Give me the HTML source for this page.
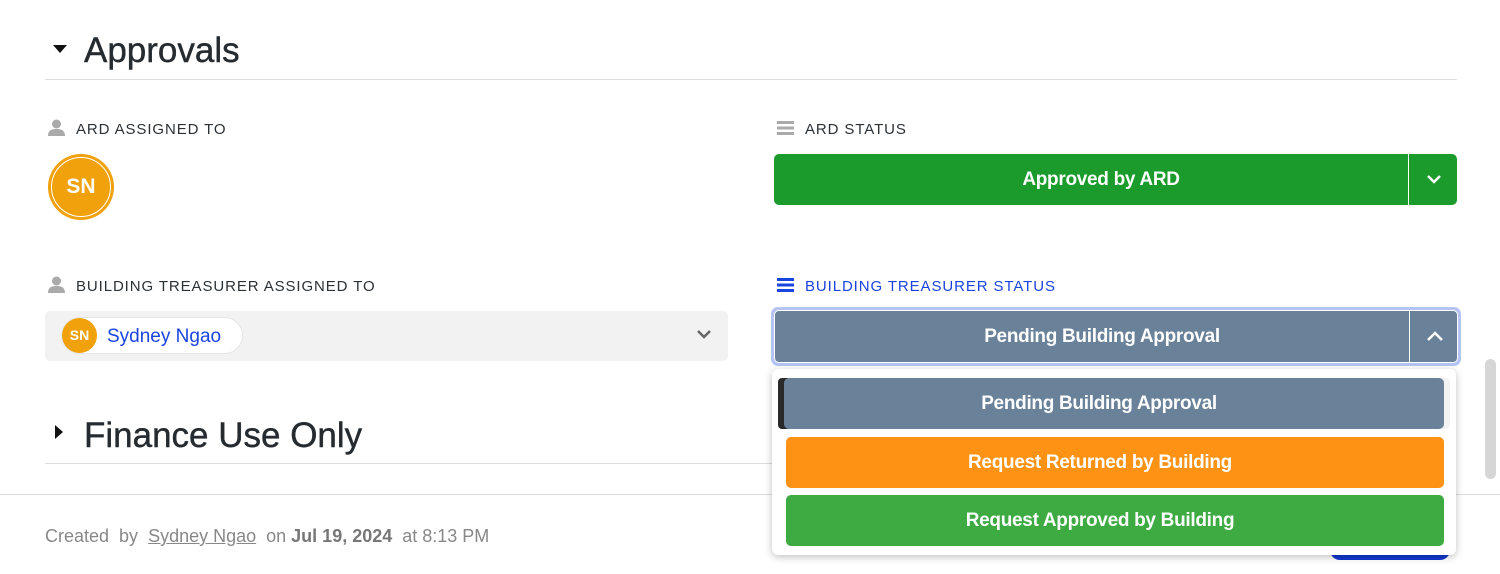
<!DOCTYPE html>
<html><head><style>
*{box-sizing:border-box;margin:0;padding:0}
body{width:1500px;height:574px;overflow:hidden;background:#fff;font-family:"Liberation Sans",sans-serif;position:relative;color:#2c3136}
.a{position:absolute}
h2{font-weight:400;font-size:35px;color:#262b30;-webkit-text-stroke:.4px #262b30}
.lbl{font-size:15px;letter-spacing:.9px;color:#2c3136}
.btn{border-radius:5px;color:#fff;font-weight:700;font-size:19px;text-align:center;letter-spacing:-.3px}
</style></head><body>
<svg class="a" style="left:53px;top:45px" width="14" height="9"><path d="M0 0H14L7 8Z" fill="#111"/></svg>
<h2 class="a" style="left:84px;top:31px">Approvals</h2>
<div class="a" style="left:45px;top:79px;width:1412px;height:1px;background:#ddd"></div>

<svg class="a" style="left:48px;top:119px" width="17" height="17"><circle cx="8.5" cy="5" r="4.5" fill="#aaa"/><path d="M0 17C0 11 4 10 8.5 10S17 11 17 17Z" fill="#aaa"/></svg>
<div class="a lbl" style="left:76px;top:121px">ARD ASSIGNED TO</div>
<div class="a" style="left:48px;top:154px;width:66px;height:66px;border-radius:50%;background:#f0a10c;"></div>
<div class="a" style="left:51px;top:157px;width:60px;height:60px;border-radius:50%;border:1px solid #fff;color:#fff;font-weight:700;font-size:21px;text-align:center;line-height:58px">SN</div>

<svg class="a" style="left:777px;top:121px" width="17" height="14"><rect y="0" width="17" height="3" fill="#aaa"/><rect y="5.5" width="17" height="3" fill="#aaa"/><rect y="11" width="17" height="3" fill="#aaa"/></svg>
<div class="a lbl" style="left:805px;top:121px">ARD STATUS</div>
<div class="a btn" style="left:774px;top:154px;width:683px;height:51px;background:#1b9b2b;line-height:51px"><span style="position:absolute;left:10px;width:634px">Approved by ARD</span><span style="position:absolute;left:634px;top:0;width:1px;height:51px;background:#fff"></span><svg style="position:absolute;left:652px;top:20px" width="16" height="11"><path d="M2 2L8 8L14 2" stroke="#fff" stroke-width="2.5" fill="none"/></svg></div>

<svg class="a" style="left:48px;top:276px" width="17" height="17"><circle cx="8.5" cy="5" r="4.5" fill="#aaa"/><path d="M0 17C0 11 4 10 8.5 10S17 11 17 17Z" fill="#aaa"/></svg>
<div class="a lbl" style="left:76px;top:278px">BUILDING TREASURER ASSIGNED TO</div>
<div class="a" style="left:45px;top:311px;width:683px;height:50px;background:#f2f2f2;border-radius:5px"></div>
<div class="a" style="left:61px;top:317px;width:182px;height:37px;border-radius:19px;background:#fff;border:1px solid #e6e6e6"></div>
<div class="a" style="left:62px;top:318px;width:35px;height:35px;border-radius:50%;background:#f0a10c;color:#fff;font-weight:700;font-size:14px;text-align:center;line-height:35px">SN</div>
<div class="a" style="left:107px;top:326px;font-size:19px;color:#1a44e0">Sydney Ngao</div>
<svg class="a" style="left:696px;top:329px" width="16" height="11"><path d="M2 2L8 8L14 2" stroke="#666" stroke-width="2.5" fill="none"/></svg>

<svg class="a" style="left:777px;top:278px" width="17" height="14"><rect y="0" width="17" height="3" fill="#1a44e0"/><rect y="5.5" width="17" height="3" fill="#1a44e0"/><rect y="11" width="17" height="3" fill="#1a44e0"/></svg>
<div class="a lbl" style="left:805px;top:278px;color:#1a44e0">BUILDING TREASURER STATUS</div>
<div class="a" style="left:771px;top:307px;width:690px;height:59px;border-radius:7px;background:#b5c4f3"></div>
<div class="a btn" style="left:774px;top:310px;width:684px;height:53px;background:#6a8299;line-height:52px;border:1px solid #fff"><span style="position:absolute;left:10px;width:634px">Pending Building Approval</span><span style="position:absolute;left:634px;top:0;width:1px;height:51px;background:#fff"></span><svg style="position:absolute;left:651px;top:19px" width="18" height="12"><path d="M2 10L9 3L16 10" stroke="#fff" stroke-width="2.5" fill="none"/></svg></div>

<svg class="a" style="left:55px;top:425px" width="9" height="14"><path d="M0 0V14L8 7Z" fill="#111"/></svg>
<h2 class="a" style="left:84px;top:416px">Finance Use Only</h2>
<div class="a" style="left:45px;top:463px;width:730px;height:1px;background:#ddd"></div>
<div class="a" style="left:0;top:494px;width:1500px;height:1px;background:#ddd"></div>
<div class="a" style="left:45px;top:526px;font-size:18px;color:#888">Created&nbsp; by&nbsp; <u>Sydney Ngao</u>&nbsp; on <b style="color:#777">Jul 19, 2024</b>&nbsp; at 8:13 PM</div>
<div class="a" style="left:1330px;top:540px;width:120px;height:20px;border-radius:10px;background:#1238d0"></div>

<div class="a" style="left:1485px;top:359px;width:11px;height:120px;border-radius:6px;background:#d6d6d6"></div>

<div class="a" style="left:772px;top:369px;width:684px;height:186px;background:#fff;border-radius:6px;box-shadow:0 2px 8px rgba(0,0,0,.25)"></div>
<div class="a" style="left:778px;top:378px;width:672px;height:51px;background:#f3f3f3;border-radius:4px"></div>
<div class="a" style="left:778px;top:378px;width:10px;height:51px;background:#2a2a2a;border-radius:4px 0 0 4px"></div>
<div class="a btn" style="left:784px;top:378px;width:660px;height:51px;background:#6a8299;line-height:52px;padding-right:30px">Pending Building Approval</div>
<div class="a btn" style="left:786px;top:437px;width:658px;height:51px;background:#fd9214;line-height:52px;padding-right:30px">Request Returned by Building</div>
<div class="a btn" style="left:786px;top:495px;width:658px;height:51px;background:#3eaa42;line-height:52px;padding-right:30px">Request Approved by Building</div>
</body></html>
